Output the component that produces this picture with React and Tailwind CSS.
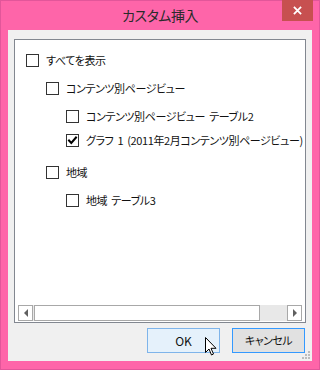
import React from "react";

const FONT = "font-['Meiryo_UI','Noto_Sans_CJK_JP',sans-serif] [font-feature-settings:'palt']";

function Box({ checked }) {
  return (
    <span className="relative inline-block h-[13px] w-[13px] shrink-0 border border-[#333] bg-white">
      {checked && (
        <svg viewBox="0 0 13 13" className="absolute -left-px -top-px h-[13px] w-[13px]">
          <path d="M3 6.5 L5.3 9 L10 3.5" fill="none" stroke="#000" strokeWidth="2" strokeLinecap="square" />
        </svg>
      )}
    </span>
  );
}

function Row({ indent, label, checked, mt }) {
  return (
    <div className={`flex h-6 items-center gap-[7px] whitespace-nowrap ${indent} ${mt}`}>
      <Box checked={checked} />
      <span className="text-[11px] leading-none tracking-[-0.4px] [word-spacing:2px] text-[#111]">{label}</span>
    </div>
  );
}

export default function App() {
  return (
    <div className={`flex h-[370px] w-[320px] flex-col border border-[#e2569a] bg-[#fe65a9] ${FONT}`}>
      <div className="relative flex h-[29px] shrink-0 items-center justify-center">
        <span className="text-[14px] tracking-[-0.5px] text-[#2b2b2b]">カスタム挿入</span>
        <div className="absolute right-[6px] top-[-1px] flex h-[21px] w-[31px] items-center justify-center bg-[#c75050]">
          <svg viewBox="0 0 10 10" className="h-[9px] w-[9px]">
            <path d="M1 1 L9 9 M9 1 L1 9" stroke="#fff" strokeWidth="2" />
          </svg>
        </div>
      </div>

      <div className="relative mx-[7px] mb-[8px] flex flex-1 flex-col bg-[#f0f0f0] pl-[6px] pr-[6px] pt-[9px]">
        <div className="flex h-[284px] flex-col border border-[#828790] bg-white">
          <div className="flex-1 overflow-hidden pt-2">
            <Row indent="pl-[11px]" label="すべてを表示" mt="" />
            <Row indent="pl-[31px]" label="コンテンツ別ページビュー" mt="mt-1" />
            <Row indent="pl-[51px]" label="コンテンツ別ページビュー テーブル2" mt="mt-1" />
            <Row indent="pl-[51px]" label="グラフ 1 (2011年2月コンテンツ別ページビュー)" checked mt="" />
            <Row indent="pl-[31px]" label="地域" mt="mt-2" />
            <Row indent="pl-[51px]" label="地域 テーブル3" mt="mt-1" />
          </div>
          <div className="mx-[3px] mb-[1px] flex h-[16px] items-stretch bg-[#e8e8e8]">
            <div className="flex w-[15px] items-center justify-center border border-[#a8a8a8] bg-white">
              <svg viewBox="0 0 6 8" className="h-[8px] w-[6px]">
                <path d="M5 0 L1 4 L5 8 Z" fill="#606060" />
              </svg>
            </div>
            <div className="ml-px w-[226px] border border-[#a8a8a8] bg-white" />
            <div className="flex-1" />
            <div className="flex w-[15px] items-center justify-center border border-[#a8a8a8] bg-white">
              <svg viewBox="0 0 6 8" className="h-[8px] w-[6px]">
                <path d="M1 0 L5 4 L1 8 Z" fill="#606060" />
              </svg>
            </div>
          </div>
        </div>

        <div className="mt-[5px] flex justify-end gap-3 pr-px">
          <div className="relative flex h-[25px] w-[73px] items-center justify-center border border-[#7eb4ea] bg-[#e5f1fb] text-[12px] text-[#111]">
            OK
            <svg viewBox="0 0 12 19" className="absolute left-[57px] top-[8px] h-[19px] w-[12px]">
              <path d="M0.5 0.5 L0.5 15.5 L4 12 L6.5 18 L8.5 17 L6 11.3 L11 11.3 Z" fill="#fff" stroke="#000" strokeWidth="1" strokeLinejoin="miter" />
            </svg>
          </div>
          <div className="flex h-[25px] w-[73px] items-center justify-center border border-[#3399ff] bg-[#e1e1e1] text-[11px] tracking-[-0.5px] text-[#111]">
            キャンセル
          </div>
        </div>

        <svg viewBox="0 0 10 10" className="absolute bottom-[1px] right-[1px] h-[10px] w-[10px]">
          {[[7, 1], [4, 4], [7, 4], [1, 7], [4, 7], [7, 7]].map(([x, y]) => (
            <rect key={`${x}-${y}`} x={x} y={y} width="2" height="2" fill="#bcbcbc" />
          ))}
        </svg>
      </div>
    </div>
  );
}
